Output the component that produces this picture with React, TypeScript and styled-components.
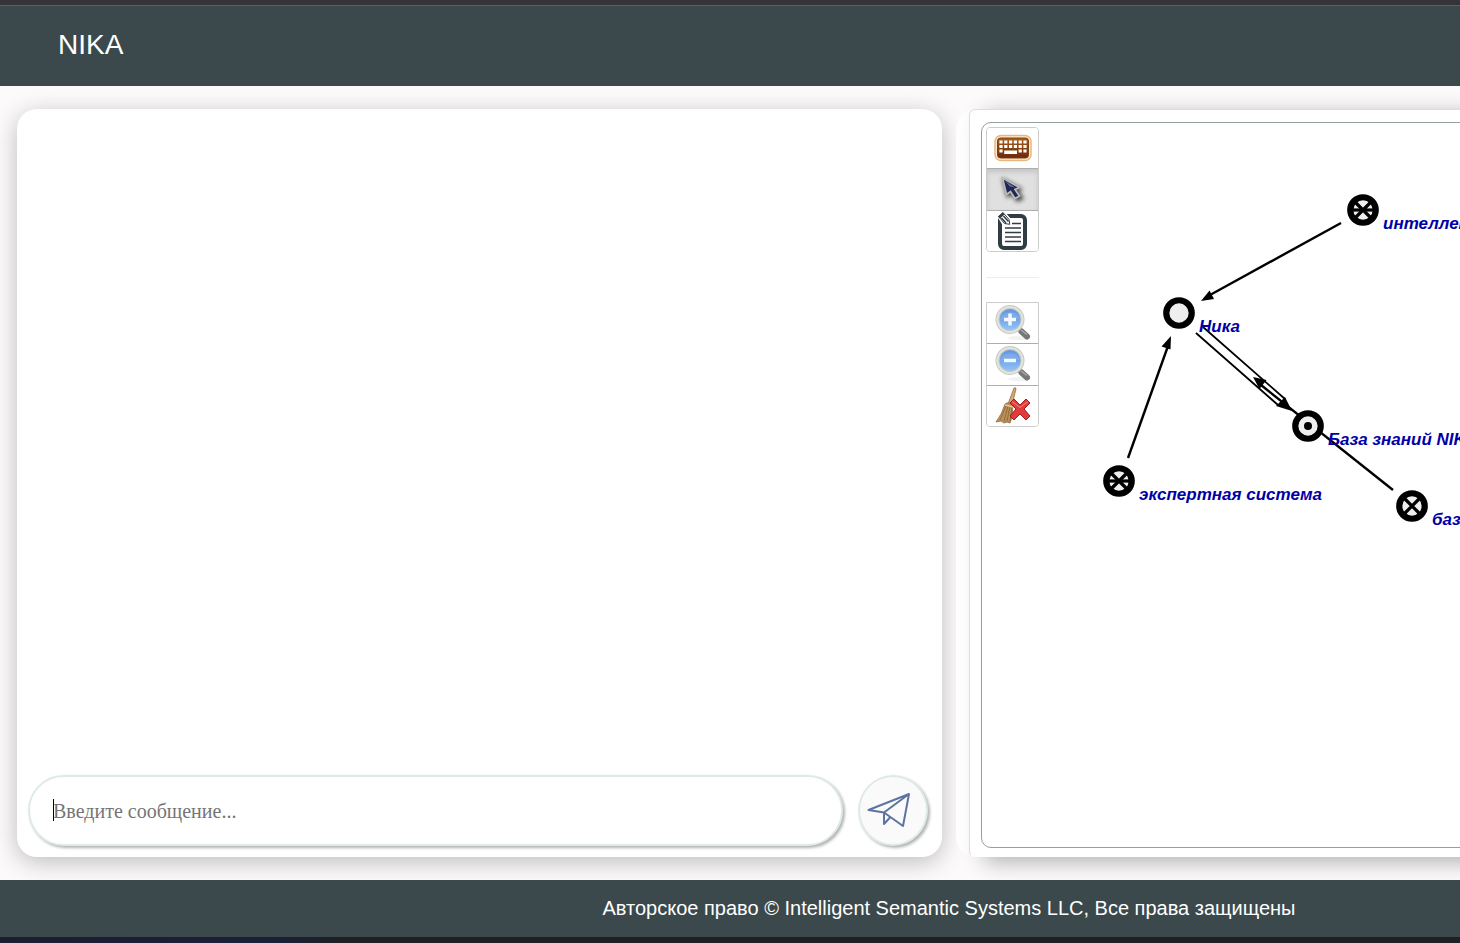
import React from "react";
import styled, { createGlobalStyle } from "styled-components";

const GlobalStyle = createGlobalStyle`
  *, *::before, *::after { box-sizing: border-box; }
  body {
    margin: 0;
    overflow: hidden;
    background: #fcfafa;
    font-family: "Liberation Sans", Arial, sans-serif;
  }
`;

const Page = styled.div`
  display: flex;
  flex-direction: column;
  width: 130%;
  min-height: 100vh;
`;

const TopStrip = styled.div`
  height: 6px;
  background: #343539;
  border-bottom: 1px solid #5d6063;
`;

const Header = styled.header`
  display: flex;
  align-items: center;
  height: 80px;
  padding: 0 58px 2px;
  background: #3b494c;
  color: #fff;
`;

const Brand = styled.h1`
  margin: 0;
  font-size: 28px;
  line-height: 32px;
  font-weight: 400;
`;

const Main = styled.main`
  flex: 1;
  display: grid;
  grid-template-columns: 1fr 1fr;
  gap: 14px;
  padding: 23px 17px;
  overflow: hidden;
`;

const ChatPanel = styled.section`
  display: flex;
  flex-direction: column;
  padding: 11px 14px 11px 11px;
  border-radius: 20px;
  background: #fff;
  box-shadow: 0 5px 25px rgba(0, 0, 0, 0.25);
`;

const Messages = styled.div`
  flex: 1;
`;

const Composer = styled.form`
  display: flex;
  gap: 15px;
`;

const Field = styled.div`
  position: relative;
  flex: 1;
  display: flex;
`;

const MessageInput = styled.input`
  flex: 1;
  height: 71px;
  padding: 1px 23px 0;
  border: 2px solid #deeaea;
  border-radius: 36px;
  outline: none;
  background: #fff;
  box-shadow: 2px 2px 3px rgba(0, 0, 0, 0.3);
  color: #000;
  font-family: "Liberation Serif", "Times New Roman", serif;
  font-size: 20px;
  &::placeholder { color: #757575; opacity: 1; }
`;

const Caret = styled.span`
  position: absolute;
  left: 25px;
  top: 24px;
  width: 1px;
  height: 22px;
  background: #000;
`;

const SendButton = styled.button`
  display: flex;
  align-items: center;
  justify-content: center;
  width: 70px;
  height: 71px;
  padding: 0 8px 2px 0;
  border: 2px solid #deeaea;
  border-radius: 50%;
  background: #fafafa;
  box-shadow: 2px 2px 3px rgba(0, 0, 0, 0.3);
`;

const GraphPanel = styled.section`
  display: flex;
  padding-left: 13px;
  border-radius: 20px;
  background: #fefefe;
`;

const Frame = styled.div`
  flex: 1;
  display: flex;
  padding: 12px 11px 8px;
  border: 1px solid #ddd;
  border-bottom-color: #fff;
  border-radius: 6px;
  background: #fff;
  box-shadow: 14px 5px 22px rgba(0, 0, 0, 0.3);
`;

const Canvas = styled.div`
  flex: 1;
  display: flex;
  align-items: stretch;
  padding: 4px;
  border: 1px solid #93a09b;
  border-radius: 10px;
`;

const Toolbar = styled.div`
  flex: none;
  width: 53px;
`;

const ToolGroup = styled.div<{ $squareTop?: boolean }>`
  display: flex;
  flex-direction: column;
  height: 125px;
  border: 1px solid #ccc;
  border-radius: ${(p) => (p.$squareTop ? "0 0 4px 4px" : "4px")};
  overflow: hidden;
`;

const Tool = styled.button<{ $active?: boolean }>`
  flex: 1;
  display: flex;
  align-items: center;
  justify-content: center;
  padding: 0;
  border: 0;
  background: ${(p) => (p.$active ? "#e0e0e0" : "#fff")};
  box-shadow: ${(p) => (p.$active ? "inset 0 3px 5px rgba(0,0,0,.125)" : "none")};
  & + & { border-top: 1px solid ${(p) => (p.$active ? "#adadad" : "#ccc")}; }
`;

const Divider = styled.hr`
  margin: 25px 0 24px;
  border: 0;
  border-top: 1px solid #eee;
`;

const Graph = styled.svg`
  flex: 1;
  min-width: 0;
  overflow: visible;
  text {
    font: italic bold 17px "Liberation Sans", Arial, sans-serif;
    fill: #0000a8;
  }
`;

const Footer = styled.footer`
  display: flex;
  align-items: center;
  justify-content: center;
  height: 57px;
  padding-bottom: 2px;
  background: #3b494c;
  color: #fff;
  font-size: 20px;
  line-height: 24px;
`;

const BottomStrip = styled.div`
  height: 6px;
  background: linear-gradient(90deg, #1e1d30 0, #1b1f38 14%, #1f2023 18%, #1f2023 100%);
`;

const PlaneIcon = () => (
  <svg width="44" height="36" viewBox="0 0 44 36" fill="none" stroke="#5d74a0" strokeWidth="2" strokeLinejoin="round" aria-hidden="true">
    <path d="M1.500 18 42 2 36 34 17 20.500Z M17 20.500 42 2 M17 20.500V32l6-6.500" />
  </svg>
);

const KeyboardIcon = () => (
  <svg width="38" height="28" viewBox="0 0 38 28" aria-hidden="true">
    <defs>
      <linearGradient id="keys" x2="0" y2="1">
        <stop stopColor="#a8601e" />
        <stop offset="1" stopColor="#6d2808" />
      </linearGradient>
    </defs>
    <rect x="1" y="1.500" width="36" height="25" rx="6" fill="#fdebd5" stroke="#e8b67f" strokeWidth="1.500" />
    <rect x="3.500" y="4" width="31" height="20" rx="3" fill="url(#keys)" stroke="#843e0c" />
    <g fill="#fff">
      {[5.4, 10.2, 15, 19.8, 24.6, 29.4].map((x) =>
        [6.5, 11].map((y) => <rect key={`${x}-${y}`} x={x} y={y} width="3.200" height="3" />)
      )}
      <rect x="5.400" y="15.500" width="3.200" height="3" />
      <rect x="10.200" y="16.500" width="12.800" height="3.500" />
      <rect x="24.600" y="15.500" width="3.200" height="3" />
      <rect x="29.400" y="15.500" width="3.200" height="3" />
    </g>
  </svg>
);

const CursorIcon = () => (
  <svg width="36" height="36" viewBox="0 0 36 36" aria-hidden="true">
    <defs>
      <filter id="cursorShade" x="-50%" y="-50%" width="200%" height="200%">
        <feGaussianBlur stdDeviation="2" />
      </filter>
    </defs>
    <path d="M7 7 12 27 17 24 22 31 29 28 24 20 28 18Z" fill="#222" opacity=".8" filter="url(#cursorShade)" />
    <path d="M7.500 7 11.500 23.500 15.500 20.500 20 27.500 24.500 25 20 18.500 24.500 16.500Z" fill="#1f2653" stroke="#b9b9b9" strokeWidth="1.800" />
    <path d="m10 10 10 6.500-5-1Z" fill="#6d7798" />
  </svg>
);

const NotesIcon = () => (
  <svg width="38" height="40" viewBox="0 0 38 40" aria-hidden="true">
    <rect x="6" y="5" width="25" height="32" rx="4" fill="#fff" stroke="#303d43" strokeWidth="4" />
    <path d="M18 12.500h9M11 17h16M11 21.500h16M11 26h16M11 30.500h16" stroke="#303d43" strokeWidth="1.500" />
    <path d="M4 4 9 1 15 8 16 14 9 12Z" fill="#fff" stroke="#fff" strokeWidth="3" />
    <path d="m4.500 5.500 4.500-4 6 7 .8 4.800-5.300-.8Z" fill="#fff" stroke="#303d43" strokeWidth="1" />
    <path d="m4 5.500 5-4 1.500 2L6 7.500Z" fill="#303d43" />
    <path d="m7.500 7 4.500 5M9.500 5l5 5.500" stroke="#303d43" strokeWidth="1.500" />
  </svg>
);

const ZoomIcon = ({ plus }: { plus?: boolean }) => (
  <svg width="38" height="40" viewBox="0 0 38 40" aria-hidden="true">
    <defs>
      <linearGradient id={plus ? "lensIn" : "lensOut"} x2="0" y2="1">
        <stop stopColor="#6495dc" />
        <stop offset=".5" stopColor="#70a6ec" />
        <stop offset="1" stopColor="#9acafb" />
      </linearGradient>
    </defs>
    <ellipse cx="25" cy="35" rx="11" ry="2" fill="#000" opacity=".05" />
    <path d="m25 26 8 7" stroke="#c6c9c6" strokeWidth="5" />
    <path d="m27.500 28.500 5.500 5" stroke="#747976" strokeWidth="6" strokeLinecap="round" />
    <path d="m27 27 6 4.500" stroke="#a4aaa6" strokeWidth="1.500" />
    <circle cx="16" cy="16.500" r="12.500" fill={`url(#${plus ? "lensIn" : "lensOut"})`} stroke="#c5c9c4" strokeWidth="4" />
    <circle cx="16" cy="16.500" r="12.500" fill="none" stroke="#e2e4df" strokeWidth="2" />
    <path d="M6 17a10.500 10.500 0 0 1 20-1q-10-2-20 1" fill="#fff" opacity=".12" />
    <path d={plus ? "M10 16.500h12M16 10.500v12" : "M10 16.500h12"} stroke="#f4f8ff" strokeWidth="3.500" />
  </svg>
);

const BroomIcon = () => (
  <svg width="38" height="40" viewBox="0 0 38 40" aria-hidden="true">
    <path d="m14 18 6-16q2-1 2 1l-4 16Z" fill="#d5aa72" stroke="#916d42" strokeWidth=".8" />
    <path d="M11 18q4-3 8 1l-1 12-2 6-3-1-3 1-3-2-5 1q6-8 9-18Z" fill="#bd905a" stroke="#8c693d" strokeWidth=".8" />
    <path d="m12 20-6 14M14 20l-4 15M16 20l-3 15M18 21l-2 14" stroke="#7e5c34" strokeWidth=".7" />
    <path d="m11 19 8 2" stroke="#e4c597" strokeWidth="1.500" />
    <path d="m16 17 4-4 6 6 6-6 4 4-6 6 6 7-4 4-6-6-6 6-4-4 6-7Z" fill="#e23b3b" stroke="#9e1b1e" strokeWidth="1" strokeLinejoin="round" />
    <path d="m18 15.500 8 6 8-6" fill="none" stroke="#f68a83" strokeWidth="1" />
  </svg>
);

type NodeKind = "plain" | "dot" | "cross" | "star";

const GraphNode = ({ x, y, kind, label }: { x: number; y: number; kind: NodeKind; label: string }) => (
  <g transform={`translate(${x} ${y})`}>
    <circle r="12.750" fill="#eee" stroke="#000" strokeWidth="6.200" />
    {kind === "dot" && <circle r="4" />}
    {(kind === "cross" || kind === "star") && (
      <path d="m-7.500-7.500 15 15m0-15-15 15" stroke="#000" strokeWidth="3.200" />
    )}
    {kind === "star" && <path d="M-10 0h20" stroke="#000" strokeWidth="3.200" />}
    <text x="20" y="19">{label}</text>
  </g>
);

export default function App() {
  return (
    <>
      <GlobalStyle />
      <Page>
        <TopStrip />
        <Header>
          <Brand>NIKA</Brand>
        </Header>
        <Main>
          <ChatPanel>
            <Messages />
            <Composer onSubmit={(e) => e.preventDefault()}>
              <Field>
                <MessageInput type="text" aria-label="Введите сообщение" placeholder="Введите сообщение..." />
                <Caret />
              </Field>
              <SendButton type="submit" aria-label="Отправить">
                <PlaneIcon />
              </SendButton>
            </Composer>
          </ChatPanel>
          <GraphPanel>
            <Frame>
              <Canvas>
                <Toolbar>
                  <ToolGroup>
                    <Tool type="button" aria-label="Клавиатура"><KeyboardIcon /></Tool>
                    <Tool type="button" aria-label="Выбор" $active><CursorIcon /></Tool>
                    <Tool type="button" aria-label="Текст"><NotesIcon /></Tool>
                  </ToolGroup>
                  <Divider />
                  <ToolGroup $squareTop>
                    <Tool type="button" aria-label="Увеличить"><ZoomIcon plus /></Tool>
                    <Tool type="button" aria-label="Уменьшить"><ZoomIcon /></Tool>
                    <Tool type="button" aria-label="Очистить"><BroomIcon /></Tool>
                  </ToolGroup>
                </Toolbar>
                <Graph>
                  <g stroke="#000" strokeWidth="2.400">
                    <path d="M302 96 171 168" />
                    <path d="M89 331 129 219" />
                    <path d="M354 363 222 258" />
                  </g>
                  <path d="M157 206 239 278M164 200 246 272" stroke="#000" strokeWidth="1.800" />
                  <path d="m162 174 8.500-10.500 4.500 8.500Z" />
                  <path d="m132 209-9.500 10.500 9 3Z" />
                  <path d="m214 250 13.500 3-7 9Z" />
                  <path d="m253 284-7-14-9 9Z" />
                  <GraphNode x={324} y={83} kind="star" label="интеллектуальная система" />
                  <GraphNode x={140} y={186} kind="plain" label="Ника" />
                  <GraphNode x={269} y={299} kind="dot" label="База знаний NIKA" />
                  <GraphNode x={80} y={354} kind="star" label="экспертная система" />
                  <GraphNode x={373} y={379} kind="cross" label="база знаний" />
                </Graph>
              </Canvas>
            </Frame>
          </GraphPanel>
        </Main>
        <Footer>Авторское право © Intelligent Semantic Systems LLC, Все права защищены</Footer>
        <BottomStrip />
      </Page>
    </>
  );
}
